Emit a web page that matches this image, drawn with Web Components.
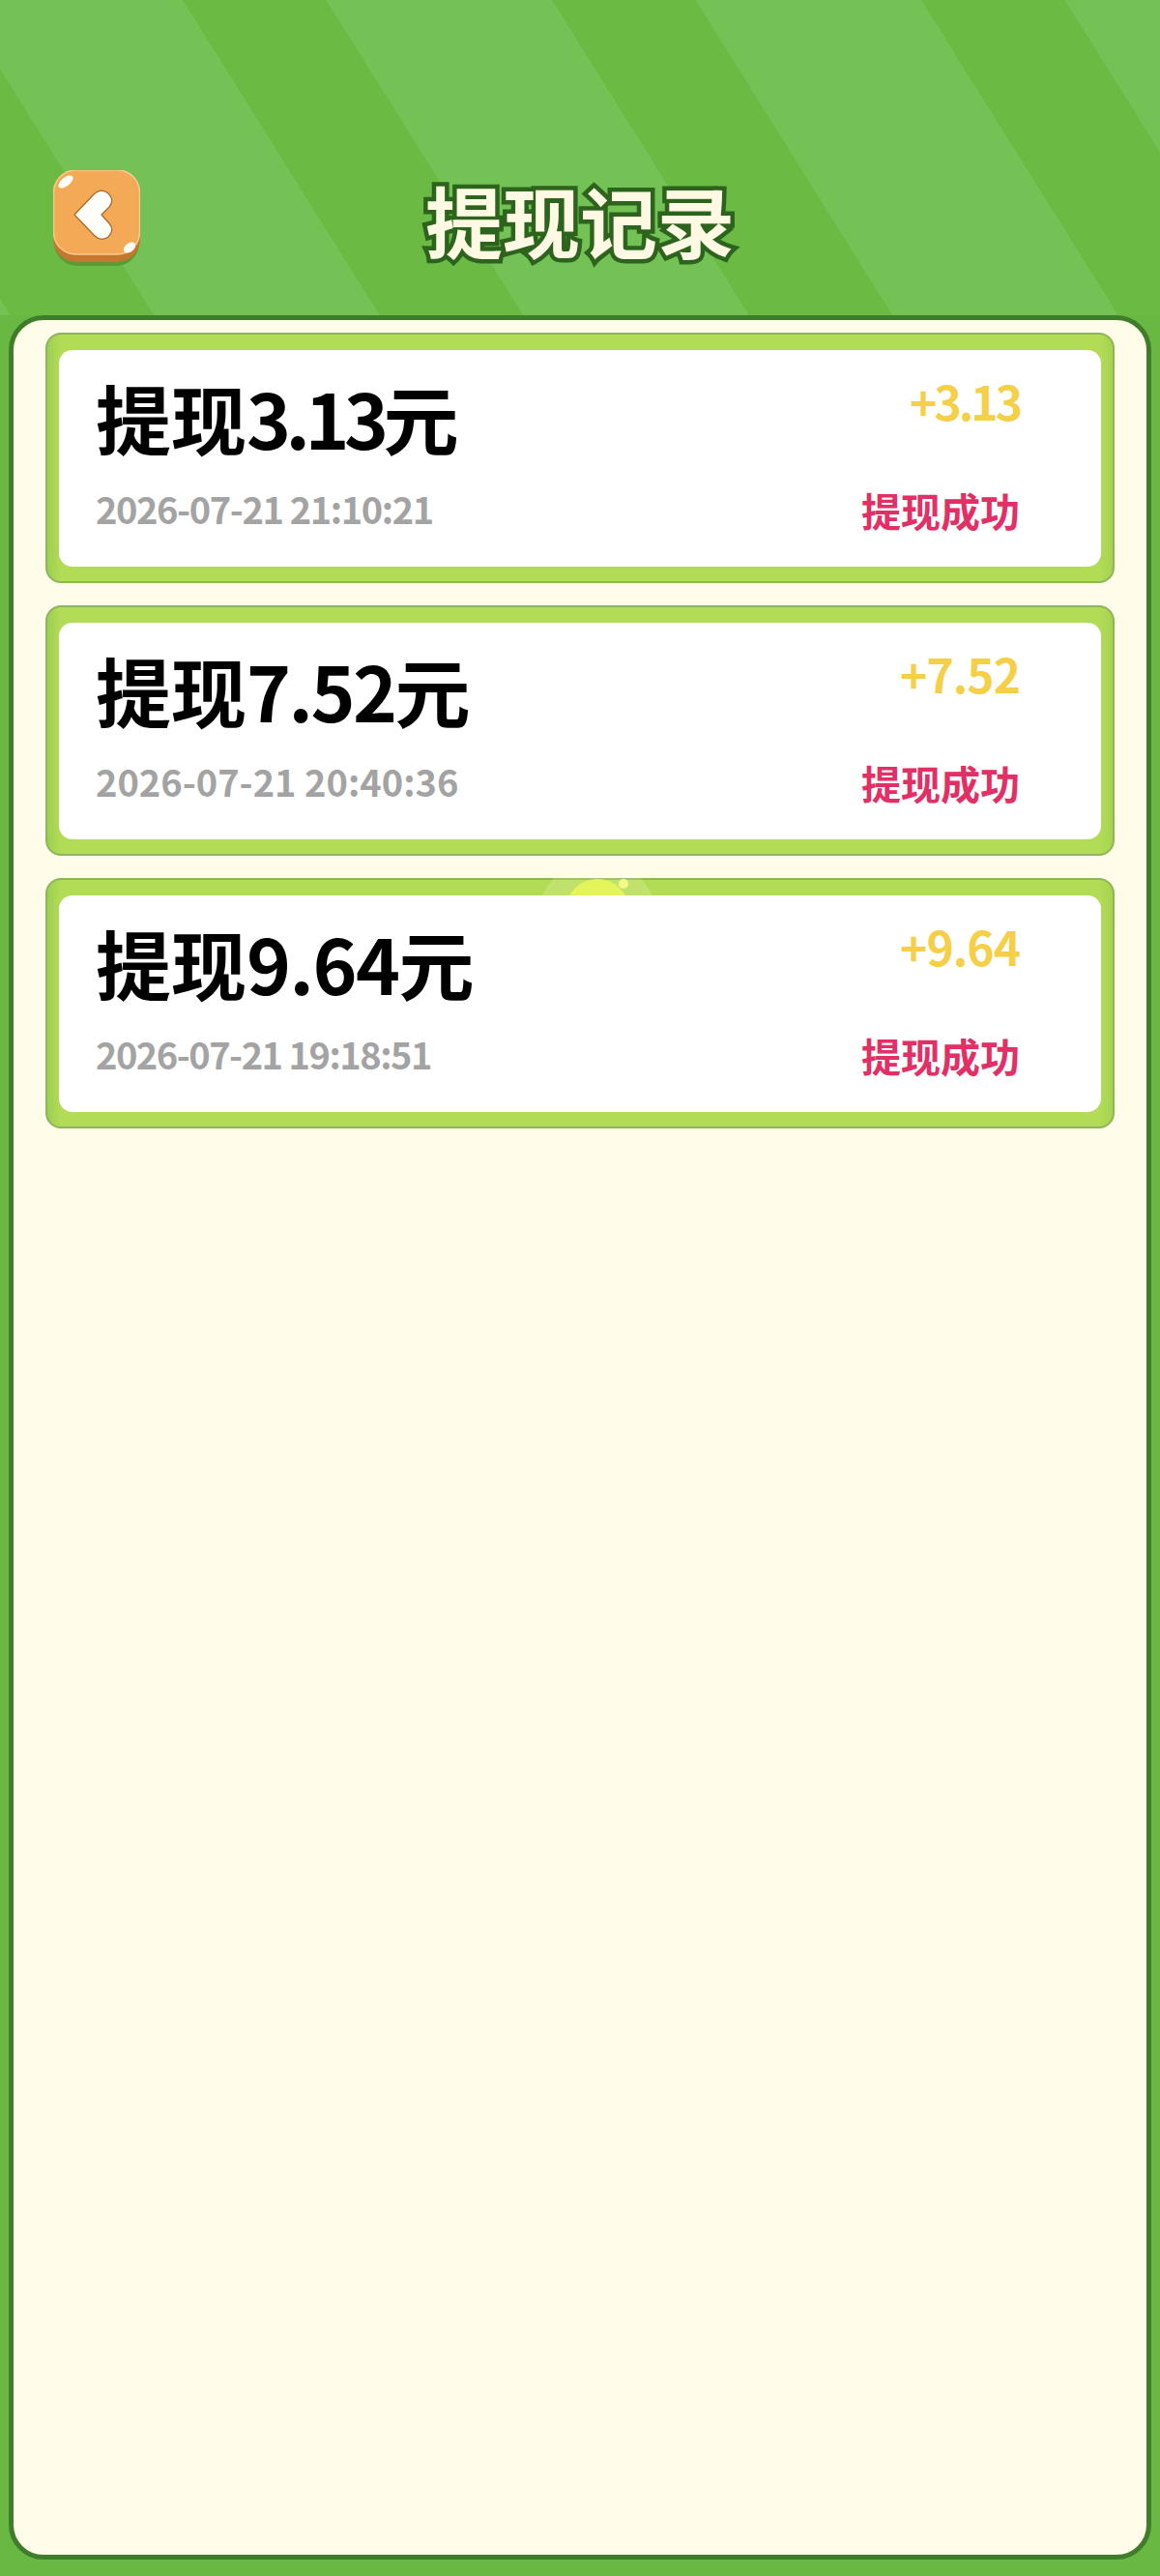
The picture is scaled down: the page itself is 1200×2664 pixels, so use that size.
<!DOCTYPE html>
<html lang="zh">
<head>
<meta charset="utf-8">
<title>提现记录</title>
<style>
  html, body { margin: 0; padding: 0; }
  body { background: #69b843; font-family: "Noto Sans CJK SC", sans-serif; }
</style>
</head>
<body>
<withdraw-page>
  <withdraw-card name="3.13" amount="+3.13" time="2026-07-21 21:10:21" spacing="-5.5" amount-spacing="-3" time-spacing="-1.4"></withdraw-card>
  <withdraw-card name="7.52" amount="+7.52" time="2026-07-21 20:40:36" spacing="-2.5" amount-spacing="-1" time-spacing="0"></withdraw-card>
  <withdraw-card name="9.64" amount="+9.64" time="2026-07-21 19:18:51" spacing="-1.5" amount-spacing="-1" time-spacing="-1.5" glow></withdraw-card>
</withdraw-page>

<script>
class BackButton extends HTMLElement {
  connectedCallback() {
    this.attachShadow({ mode: 'open' });
    this.shadowRoot.innerHTML = `
      <style>
        :host { display: block; width: 90px; height: 100px; }
        svg { display: block; }
      </style>
      <svg width="90" height="100" viewBox="0 0 90 100" aria-label="返回">
        <rect x="1" y="8" width="88" height="91" rx="24" fill="#5c9a38"/>
        <rect x="0" y="4" width="90" height="91" rx="24" fill="#c4772f"/>
        <rect x="0.5" y="0" width="89" height="87" rx="23" fill="#f3a955" stroke="#f9c98c" stroke-width="1.5"/>
        <ellipse cx="13" cy="12" rx="9" ry="4.5" fill="#fffdf5" transform="rotate(-38 13 12)"/>
        <ellipse cx="79" cy="80" rx="7" ry="4.5" fill="#fffdf5" transform="rotate(-38 79 80)"/>
        <path d="M22 46 L42 25 Q50 18 57 24 Q64 31 58 38 L50 46 L58 55 Q64 62 57 69 Q50 74 43 68 Z"
              fill="#fffefa" stroke="#a8692c" stroke-width="1.2" stroke-linejoin="round"/>
      </svg>
    `;
  }
}

class WithdrawHeader extends HTMLElement {
  connectedCallback() {
    this.attachShadow({ mode: 'open' });
    this.shadowRoot.innerHTML = `
      <style>
        :host {
          display: grid;
          grid-template-columns: 145px 1fr 145px;
          align-items: start;
          height: 326px;
          padding-top: 178px;
          box-sizing: border-box;
          background: repeating-linear-gradient(58deg,
            #74c155 0, #74c155 9px,
            #6aba43 9px, #6aba43 135px,
            #74c155 135px, #74c155 324px);
        }
        back-button { margin: -2px 0 0 55px; }
        h1 {
          margin: 0;
          text-align: center;
          font: 700 80px/96px "Noto Sans CJK SC", sans-serif;
          color: #fdf9e2;
          -webkit-text-stroke: 9px #2c631d;
          paint-order: stroke fill;
        }
      </style>
      <back-button></back-button>
      <h1>提现记录</h1>
    `;
  }
}

class WithdrawCard extends HTMLElement {
  connectedCallback() {
    const name = this.getAttribute('name');
    const amount = this.getAttribute('amount');
    const time = this.getAttribute('time');
    const spacing = this.getAttribute('spacing') || 0;
    const amountSpacing = this.getAttribute('amount-spacing') || 0;
    const timeSpacing = this.getAttribute('time-spacing') || 0;
    this.attachShadow({ mode: 'open' });
    this.shadowRoot.innerHTML = `
      <style>
        :host {
          display: block;
          position: relative;
          height: 259px;
          box-sizing: border-box;
          padding: 16px 12px 15px;
          background: linear-gradient(90deg, #9ccf52 0, #b3dc56 14px, #b3dc56 calc(100% - 14px), #a5d352 100%);
          border: 2px solid #8bb65a;
          border-radius: 16px;
        }
        .glow {
          position: absolute;
          left: 504px;
          top: -31px;
          width: 130px;
          height: 60px;
        }
        .inner {
          position: relative;
          height: 100%;
          box-sizing: border-box;
          padding: 23px 84px 0 38px;
          background: #fff;
          border-radius: 14px;
          display: grid;
          grid-template-columns: 1fr auto;
          grid-template-rows: 118px auto;
          font-family: "Noto Sans CJK SC", sans-serif;
          font-weight: 700;
        }
        .name {
          font-size: 78px;
          line-height: 92px;
          color: #000;
          white-space: nowrap;
        }
        .name b { font-weight: 700; letter-spacing: ${spacing}px; }
        .amount {
          font-size: 48px;
          line-height: 56px;
          color: #f4cf47;
          text-align: right;
          letter-spacing: ${amountSpacing}px;
          margin-top: 1px;
        }
        .time {
          font-size: 38px;
          line-height: 46px;
          color: #a3a3a3;
          letter-spacing: ${timeSpacing}px;
          white-space: nowrap;
        }
        .status {
          font-size: 41px;
          line-height: 50px;
          color: #e22f66;
          text-align: right;
          margin-top: -1px;
        }
      </style>
      ${this.hasAttribute('glow') ? `
      <svg class="glow" viewBox="0 0 130 60">
        <defs>
          <linearGradient id="fade" x1="0" y1="0" x2="0" y2="1">
            <stop offset="0" stop-color="#eaf78c" stop-opacity="0"/>
            <stop offset=".38" stop-color="#eaf78c" stop-opacity=".25"/>
            <stop offset=".5" stop-color="#eaf78c" stop-opacity="1"/>
          </linearGradient>
          <clipPath id="band"><rect x="0" y="29" width="130" height="31"/></clipPath>
        </defs>
        <circle cx="65" cy="70" r="60" fill="none" stroke="url(#fade)" stroke-width="2"/>
        <g clip-path="url(#band)">
          <circle cx="65" cy="70" r="60" fill="#fffbd0" fill-opacity=".18"/>
          <circle cx="65" cy="63" r="33" fill="#e4f55c"/>
          <circle cx="92" cy="35" r="5" fill="#f3fa88"/>
        </g>
      </svg>` : ''}
      <div class="inner">
        <div class="name">提现<b>${name}</b>元</div>
        <div class="amount">${amount}</div>
        <div class="time">${time}</div>
        <div class="status">提现成功</div>
      </div>
    `;
  }
}

class WithdrawPage extends HTMLElement {
  connectedCallback() {
    this.attachShadow({ mode: 'open' });
    this.shadowRoot.innerHTML = `
      <style>
        :host {
          display: flex;
          flex-direction: column;
          height: 2664px;
          box-sizing: border-box;
          padding-bottom: 17px;
        }
        .panel {
          flex: 1;
          margin: 0 9px;
          padding: 13px 33px 0 33px;
          box-sizing: border-box;
          background: #fffde9;
          border: 5px solid #3f7d2a;
          border-radius: 36px;
          display: flex;
          flex-direction: column;
          gap: 23px;
        }
      </style>
      <withdraw-header></withdraw-header>
      <div class="panel"><slot></slot></div>
    `;
  }
}

customElements.define('back-button', BackButton);
customElements.define('withdraw-header', WithdrawHeader);
customElements.define('withdraw-card', WithdrawCard);
customElements.define('withdraw-page', WithdrawPage);
</script>
</body>
</html>
